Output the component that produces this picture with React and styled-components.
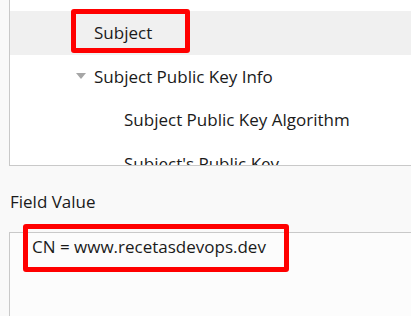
import React from "react";
import styled, { createGlobalStyle } from "styled-components";

const Global = createGlobalStyle`
  html, body { margin: 0; padding: 0; background: #f9f9f9; }
  body { font-family: "Open Sans", "Noto Sans", sans-serif; color: #1a1a1a; }
`;

const Page = styled.div`
  width: 411px;
  height: 316px;
  overflow: hidden;
  display: flex;
  flex-direction: column;
`;

const Tree = styled.div`
  margin-left: 9px;
  background: #ffffff;
  border-left: 1px solid #c9c9c9;
  border-bottom: 1px solid #c9c9c9;
  overflow: hidden;
  padding-top: 11px;
  box-sizing: content-box;
  height: 154px;
  flex-shrink: 0;
`;

const Row = styled.div`
  position: relative;
  height: 43.5px;
  display: flex;
  align-items: center;
  padding-left: ${(p) => p.$indent}px;
  background: ${(p) => (p.$selected ? "#f0f0f0" : "transparent")};
  font-size: 17px;
  white-space: nowrap;
`;

const Caret = styled.span`
  width: 0;
  height: 0;
  border-left: 5px solid transparent;
  border-right: 5px solid transparent;
  border-top: 6px solid #a6a6a6;
  margin-right: 8px;
  margin-left: -18px;
`;

const Label = styled.div`
  font-size: 17px;
  padding: 4px 0 0 10px;
  height: 66px;
  box-sizing: border-box;
  display: flex;
  align-items: center;
  flex-shrink: 0;
`;

const ValueBox = styled.div`
  position: relative;
  flex: 1;
  margin-left: 9px;
  background: #fcfcfc;
  border-left: 1px solid #c9c9c9;
  border-top: 1px solid #c9c9c9;
  padding: 2px 0 0 22px;
  font-size: 17px;
  line-height: 24px;
`;

const Highlight = styled.div`
  position: absolute;
  left: ${(p) => p.$left}px;
  top: ${(p) => p.$top}px;
  width: ${(p) => p.$width}px;
  height: ${(p) => p.$height}px;
  border: 5px solid #ff0000;
  border-radius: 3px;
  box-sizing: border-box;
  pointer-events: none;
`;

export default function App() {
  return (
    <>
      <Global />
      <Page>
        <Tree>
          <Row $indent={84} $selected>
            Subject
            <Highlight $left={61} $top={-2} $width={119} $height={44} />
          </Row>
          <Row $indent={84}>
            <Caret />
            Subject Public Key Info
          </Row>
          <Row $indent={114}>Subject Public Key Algorithm</Row>
          <Row $indent={114}>Subject's Public Key</Row>
        </Tree>
        <Label>Field Value</Label>
        <ValueBox>
          CN = www.recetasdevops.dev
          <Highlight $left={13} $top={-9} $width={266} $height={48} />
        </ValueBox>
      </Page>
    </>
  );
}
